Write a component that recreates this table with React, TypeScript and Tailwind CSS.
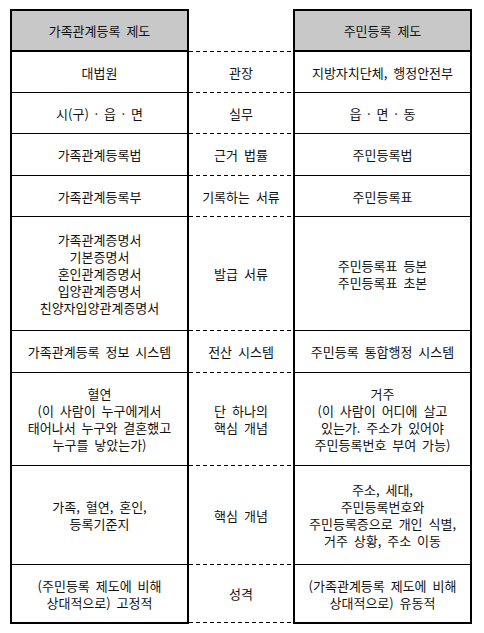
const FONT = { fontFamily: '"Noto Sans CJK KR", "Noto Sans", sans-serif' }

interface Row {
  h: string
  left: string[]
  mid: string[]
  right: string[]
  tight?: boolean
}

// 행 높이는 원본 표의 줄 간격에 맞춤 (첫 행은 위 테두리 없음)
const rows: Row[] = [
  { h: 'h-[40px]', left: ['대법원'], mid: ['관장'], right: ['지방자치단체, 행정안전부'] },
  { h: 'h-[41px]', left: ['시(구) · 읍 · 면'], mid: ['실무'], right: ['읍 · 면 · 동'], tight: true },
  { h: 'h-[42px]', left: ['가족관계등록법'], mid: ['근거 법률'], right: ['주민등록법'] },
  { h: 'h-[41px]', left: ['가족관계등록부'], mid: ['기록하는 서류'], right: ['주민등록표'] },
  {
    h: 'h-[114px]',
    left: ['가족관계증명서', '기본증명서', '혼인관계증명서', '입양관계증명서', '친양자입양관계증명서'],
    mid: ['발급 서류'],
    right: ['주민등록표 등본', '주민등록표 초본'],
  },
  { h: 'h-[42px]', left: ['가족관계등록 정보 시스템'], mid: ['전산 시스템'], right: ['주민등록 통합행정 시스템'] },
  {
    h: 'h-[93px]',
    left: ['혈연', '(이 사람이 누구에게서', '태어나서 누구와 결혼했고', '누구를 낳았는가)'],
    mid: ['단 하나의', '핵심 개념'],
    right: ['거주', '(이 사람이 어디에 살고', '있는가. 주소가 있어야', '주민등록번호 부여 가능)'],
  },
  {
    h: 'h-[99px]',
    left: ['가족, 혈연, 혼인,', '등록기준지'],
    mid: ['핵심 개념'],
    right: ['주소, 세대,', '주민등록번호와', '주민등록증으로 개인 식별,', '거주 상황, 주소 이동'],
  },
  {
    h: 'h-[58px]',
    left: ['(주민등록 제도에 비해', '상대적으로) 고정적'],
    mid: ['성격'],
    right: ['(가족관계등록 제도에 비해', '상대적으로) 유동적'],
  },
]

function Lines({ lines, tight }: { lines: string[]; tight?: boolean }) {
  return (
    <div className={`text-center ${tight ? '[word-spacing:1px]' : ''}`}>
      {lines.map((l, i) => (
        <div key={i} className="whitespace-nowrap">{l}</div>
      ))}
    </div>
  )
}

function SystemBox({ title, side }: { title: string; side: 'left' | 'right' }) {
  return (
    <div className="w-[179px] border-2 border-black">
      <div className="h-[41px] bg-[#c8c8c8] border-b-2 border-black flex items-center justify-center">
        {title}
      </div>
      {rows.map((r, i) => (
        <div
          key={i}
          className={`${r.h} flex items-center justify-center ${i > 0 ? 'border-t border-black' : ''}`}
        >
          <Lines lines={side === 'left' ? r.left : r.right} tight={r.tight} />
        </div>
      ))}
    </div>
  )
}

// 4px 선 / 3px 간격 점선
const DASH = 'bg-[repeating-linear-gradient(90deg,#000_0_4px,transparent_4px_7px)] bg-[length:100%_1px] bg-no-repeat bg-top'

export default function App() {
  return (
    <div
      className="w-[484px] h-[633px] bg-white text-[#111] text-[13px] leading-[17px] [word-spacing:3px]"
      style={FONT}
    >
      <div className="flex pl-[10px] pt-[9px]">
        <SystemBox title="가족관계등록 제도" side="left" />

        {/* 가운데 구분 열 */}
        <div className="w-[104px] flex flex-col">
          <div className="h-[42px]" />
          {rows.map((r, i) => (
            <div
              key={i}
              className={`${i === 0 ? 'h-[41px]' : r.h} pt-px flex items-center justify-center ${DASH}`}
            >
              <Lines lines={r.mid} />
            </div>
          ))}
          <div className={`h-px ${DASH}`} />
        </div>

        <SystemBox title="주민등록 제도" side="right" />
      </div>
    </div>
  )
}
